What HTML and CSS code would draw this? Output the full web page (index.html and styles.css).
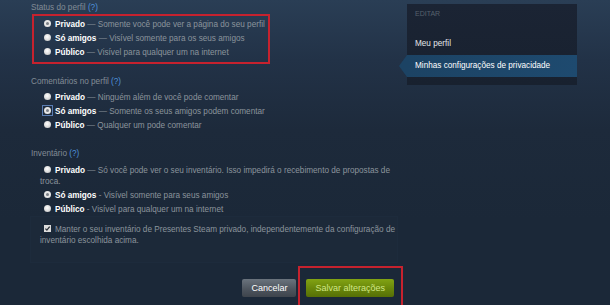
FILE: index.html
```html
<!DOCTYPE html>
<html lang="pt">
<head>
<meta charset="utf-8">
<title>Configurações de privacidade</title>
<link rel="stylesheet" href="styles.css">
</head>
<body>
<div class="page">
  <main class="main">
    <section class="group">
      <div class="heading">Status do perfil <span class="help">(?)</span></div>
      <div class="options marked">
        <div class="opt"><span class="radio checked"></span><b>Privado</b> — Somente você pode ver a página do seu perfil</div>
        <div class="opt"><span class="radio"></span><b>Só amigos</b> — Visível somente para os seus amigos</div>
        <div class="opt"><span class="radio"></span><b>Público</b> — Visível para qualquer um na internet</div>
      </div>
    </section>

    <section class="group g2">
      <div class="heading">Comentários no perfil <span class="help">(?)</span></div>
      <div class="options">
        <div class="opt"><span class="radio"></span><b>Privado</b> — Ninguém além de você pode comentar</div>
        <div class="opt"><span class="radio checked focused"></span><b>Só amigos</b> — Somente os seus amigos podem comentar</div>
        <div class="opt"><span class="radio"></span><b>Público</b> — Qualquer um pode comentar</div>
      </div>
    </section>

    <section class="group g3">
      <div class="heading">Inventário <span class="help">(?)</span></div>
      <div class="options">
        <div class="opt"><span class="radio"></span><b>Privado</b> — Só você pode ver o seu inventário. Isso impedirá o recebimento de propostas de troca.</div>
        <div class="opt"><span class="radio checked"></span><b>Só amigos</b> - Visível somente para seus amigos</div>
        <div class="opt"><span class="radio"></span><b>Público</b> - Visível para qualquer um na internet</div>
      </div>
      <div class="giftbox">
        <div class="opt"><svg class="check" width="7" height="7" viewBox="0 0 7 7"><rect width="7" height="7" fill="#dcdcdc"/><path d="M1.4 3.6 L2.9 5.1 L5.7 1.7" fill="none" stroke="#2a2f36" stroke-width="1.3"/></svg>Manter o seu inventário de Presentes Steam privado, independentemente da configuração de inventário escolhida acima.</div>
      </div>
    </section>

    <div class="actions">
      <span class="btn grey">Cancelar</span>
      <div class="btnmark"><span class="btn green">Salvar alterações</span></div>
    </div>
  </main>

  <aside class="side">
    <div class="side-title">EDITAR</div>
    <div class="side-item">Meu perfil</div>
    <div class="side-item active">Minhas configurações de privacidade</div>
  </aside>
</div>
</body>
</html>
```

FILE: styles.css
```css
html, body {
  margin: 0;
  padding: 0;
}
body {
  width: 610px;
  height: 305px;
  overflow: hidden;
  background: linear-gradient(to bottom, #2a3e55 0px, #223247 60px, #1d2a3b 130px, #1b2838 220px);
  font-family: "Liberation Sans", Arial, sans-serif;
  font-size: 8.2px;
  color: #8b949c;
}
.page {
  display: flex;
  align-items: flex-start;
}
.main {
  width: 372px;
  padding: 1px 0 0 31px;
}
.heading {
  line-height: 13px;
  color: #828c96;
}
.help {
  color: #4f93dc;
}
.options.marked {
  width: 238px;
  box-sizing: border-box;
  margin-left: 1px;
  border: 2px solid #c6222e;
  padding: 1px 0 3px 0;
}
.options.marked .opt {
  margin-left: 6px;
}
.opt {
  margin-left: 9px;
  line-height: 11px;
  padding: 1.5px 0;
  color: #8b949c;
}
.opt b {
  color: #ffffff;
  font-weight: bold;
}
.radio {
  position: relative;
  display: inline-block;
  box-sizing: border-box;
  width: 7px;
  height: 7px;
  border-radius: 50%;
  background: radial-gradient(circle at 45% 40%, #ffffff 0, #d8d8d8 60%, #b8b8b8 100%);
  vertical-align: -0.5px;
  margin: 0 4px 0 4px;
}
.radio.checked {
  border: 2px solid #e6e6e6;
  background: #7a7f86;
}
.radio.focused::after {
  content: "";
  position: absolute;
  left: -4px;
  top: -4px;
  width: 9px;
  height: 9px;
  border: 1px solid #5a7db3;
}
.g2 {
  margin-top: 11px;
}
.g2 .heading {
  margin-bottom: 2px;
}
.g3 {
  margin-top: 15px;
}
.g3 .heading {
  margin-bottom: 3px;
}
.giftbox {
  margin-left: -1px;
  width: 368px;
  box-sizing: border-box;
  padding: 6px 0 16px 1px;
  background: #1c2939;
  box-shadow: inset 0 0 0 1px #1d2b3c;
}
.check {
  vertical-align: -0.5px;
  margin: 0 4px 0 4px;
}
.actions {
  display: flex;
  justify-content: flex-end;
  align-items: flex-start;
  margin-top: 3px;
}
.btn {
  display: inline-block;
  height: 18px;
  line-height: 18px;
  padding: 0 9px;
  font-size: 9px;
  border-radius: 2px;
}
.btn.grey {
  margin: 13px 2px 0 0;
  color: #ffffff;
  background: linear-gradient(to bottom, #6a737d 0%, #4c535c 60%, #3e444c 100%);
}
.btnmark {
  border: 2px solid #c6222e;
  padding: 11px 7px 20px 6px;
}
.btn.green {
  color: #d2e885;
  background: linear-gradient(to bottom, #82a313 0%, #6a880b 50%, #566f06 100%);
}
.side {
  width: 170px;
  margin: 4px 0 0 4px;
  box-sizing: border-box;
  padding: 6px 0 8px 0;
  background: linear-gradient(to bottom, #1b2434 0%, #18212f 100%);
}
.side-title {
  padding-left: 8px;
  font-size: 7px;
  line-height: 8px;
  color: #56616d;
  margin-bottom: 15px;
}
.side-item {
  position: relative;
  padding-left: 8px;
  line-height: 22px;
  color: #e3e6e9;
}
.side-item.active {
  background: linear-gradient(to right, #1c4364 0%, #1e4a6f 100%);
  color: #ffffff;
}
.side-item.active::before {
  content: "";
  position: absolute;
  left: -8px;
  top: 0;
  border-right: 8px solid #1c4364;
  border-top: 11px solid transparent;
  border-bottom: 11px solid transparent;
}
```
